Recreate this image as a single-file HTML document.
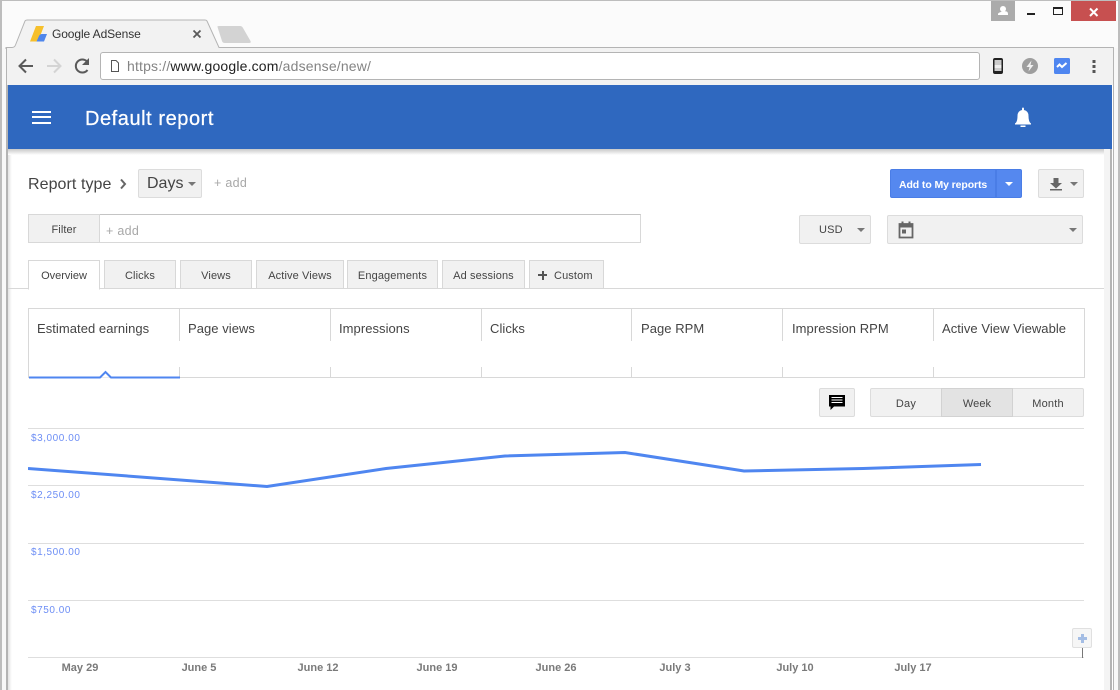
<!DOCTYPE html>
<html><head><meta charset="utf-8"><style>
html,body{margin:0;padding:0;background:#fff}
#p{position:relative;width:1120px;height:690px;overflow:hidden;background:#fff;font-family:"Liberation Sans",sans-serif;color:#444}
#p div,#p span.a{position:absolute;box-sizing:border-box}
.t{white-space:nowrap}
.btn{background:#f1f1f1;border:1px solid #dcdcdc;border-radius:2px}
.tab{top:260px;height:29px;background:#f1f1f1;border:1px solid #d8d8d8;border-bottom:1px solid #d8d8d8;font-size:11px;line-height:30px;text-align:center;color:#444;letter-spacing:.12px}
.m{top:321px;font-size:13px;color:#444;white-space:nowrap;letter-spacing:.05px;line-height:16px}
.sep{width:1px;background:#d8d8d8}
.g{left:28px;width:1056px;height:1px;background:#dedede}
.y{left:31px;font-size:10px;color:#6d8ef5;white-space:nowrap;letter-spacing:.55px;line-height:12px}
.x{top:662px;font-size:11px;font-weight:bold;color:#7a7a7a;white-space:nowrap;text-align:center;width:80px;line-height:13px}
.car{width:0;height:0;border-left:4px solid transparent;border-right:4px solid transparent;border-top:4px solid #777}
</style></head><body><div id="p">
<!-- window frame -->
<div style="left:0;top:0;width:1120px;height:48px;background:#fbfbfb"></div>
<div style="left:0;top:0;width:1120px;height:1px;background:#bdbdbd"></div>
<div style="left:0;top:0;width:2px;height:690px;background:#bdbdbd"></div>
<div style="left:2px;top:48px;width:4px;height:642px;background:#f8f8f8"></div>
<div style="left:1114px;top:48px;width:4px;height:642px;background:#f8f8f8"></div>
<div style="left:1118px;top:0;width:2px;height:690px;background:#bdbdbd"></div>
<!-- caption buttons -->
<div style="left:991px;top:1px;width:24px;height:20px;background:#ababab"></div>
<svg class="a" style="position:absolute;left:991px;top:1px" width="24" height="20"><circle cx="12" cy="8" r="3" fill="#fff"/><path d="M7 14v-1q0-1.500 5-2.500t5 2.500v1z" fill="#fff"/></svg>
<div style="left:1027px;top:13px;width:8px;height:2px;background:#222"></div>
<div style="left:1053px;top:7px;width:10px;height:8px;border:1px solid #222;border-top-width:2px"></div>
<div style="left:1071px;top:1px;width:45px;height:20px;background:#c75050"></div>
<svg style="position:absolute;left:1089px;top:7px" width="10" height="10"><path d="M1 1.500 8.500 9M8.500 1.500 1 9" stroke="#fff" stroke-width="2"/></svg>
<!-- tab strip -->
<svg style="position:absolute;left:0;top:0" width="260" height="50">
<path d="M6 48V47H13Q15 47 16 45L25 21Q26 20 28 20H204Q206 20 207 21L219 47H260V49H6Z" fill="#f2f2f2"/>
<path d="M6 49V47.500H12Q14.500 47.500 15.500 45L25 21Q25.500 20 27.500 20H205Q206.500 20 207 21L219 47.500H260" fill="none" stroke="#b4b4b4" stroke-width="1"/>
<path d="M217.500 27Q217 26 219 26H240Q242 26 243 28L250.500 41Q251.500 43 249 43H225Q222.500 43 222 41Z" fill="#d3d3d3"/>
<path d="M36 26H44L38 41.500H30Z" fill="#f6c02c"/><path d="M42 34H47L44 41.500H36.500L39 36Q40 34 42 34Z" fill="#4f86ec"/>
<path d="M193.500 30.500 200.500 37.500M200.500 30.500 193.500 37.500" stroke="#5a5a5a" stroke-width="1.800"/>
</svg>
<div class="t" style="left:52px;top:27px;font-size:12px;line-height:15px;color:#333;letter-spacing:-.1px">Google AdSense</div>
<!-- toolbar -->
<div style="left:219px;top:47px;width:895px;height:1px;background:#b4b4b4"></div>
<div style="left:6px;top:48px;width:1108px;height:37px;background:#f2f2f2;border-left:1px solid #b4b4b4;border-right:1px solid #b4b4b4"></div>
<div style="left:100px;top:52px;width:880px;height:28px;background:#fff;border:1px solid #b4b4b4;border-radius:3px"></div>
<svg style="position:absolute;left:0;top:48px" width="130" height="36">
<path d="M33 18H20M26 11.500 19.500 18 26 24.500" fill="none" stroke="#5a5a5a" stroke-width="2"/>
<path d="M47 18H60M54 11.500 60.500 18 54 24.500" fill="none" stroke="#d4d4d4" stroke-width="2"/>
<path d="M87.500 22A6.500 6.500 0 1 1 87 13.500" fill="none" stroke="#5a5a5a" stroke-width="2"/><path d="M89 10V17H82Z" fill="#5a5a5a"/>
<path d="M111.500 12.500H116L118.500 15V23.500H111.500Z" fill="#fff" stroke="#555" stroke-width="1"/>
</svg>
<div class="t" style="left:127px;top:58px;font-size:14px;line-height:17px;color:#848484;letter-spacing:.17px">https://<span style="color:#222">www.google.com</span>/adsense/new/</div>
<svg style="position:absolute;left:985px;top:52px" width="125" height="28">
<rect x="8" y="6" width="10" height="16" rx="2" fill="#222"/><rect x="9.500" y="8" width="7" height="11" fill="#ccc"/><rect x="9.500" y="13" width="7" height="3" fill="#eee"/>
<circle cx="45" cy="14" r="8" fill="#9e9e9e"/><path d="M46.500 8.500 41.500 15H44.500L43.500 19.500 48.500 13H45.500Z" fill="#f2f2f2"/>
<rect x="69" y="6" width="16" height="16" rx="1.500" fill="#4f86f0"/><path d="M72 15 74.500 12.500 77 15 81.500 11" fill="none" stroke="#fff" stroke-width="2"/>
<rect x="107.500" y="8" width="3" height="3" fill="#555"/><rect x="107.500" y="13" width="3" height="3" fill="#555"/><rect x="107.500" y="18" width="3" height="3" fill="#555"/>
</svg>
<!-- page side chrome -->
<div style="left:6px;top:85px;width:2px;height:605px;background:#b4b4b4"></div>
<div style="left:8px;top:149px;width:4px;height:541px;background:linear-gradient(90deg,#e4e4e4,#fff)"></div>
<div style="left:1104px;top:149px;width:6px;height:541px;background:#f4f4f4"></div>
<div style="left:1110px;top:149px;width:2px;height:541px;background:#b4b4b4"></div>
<div style="left:1112px;top:149px;width:1px;height:541px;background:#fff"></div>
<div style="left:1113px;top:85px;width:1px;height:605px;background:#b4b4b4"></div>
<!-- header -->
<div style="left:8px;top:149px;width:1096px;height:6px;background:linear-gradient(#c8c8c8,#fff)"></div>
<div style="left:8px;top:85px;width:1104px;height:64px;background:#2f68bf"></div>
<div style="left:32px;top:111px;width:19px;height:2px;background:#fff"></div>
<div style="left:32px;top:116px;width:19px;height:2px;background:#fff"></div>
<div style="left:32px;top:122px;width:19px;height:2px;background:#fff"></div>
<div class="t" style="left:85px;top:107px;font-size:20px;line-height:24px;color:#fff;letter-spacing:.56px;-webkit-text-stroke:.25px #fff">Default report</div>
<svg style="position:absolute;left:1012px;top:105px" width="22" height="24"><path d="M3 18.500Q5.500 17 5.500 11Q5.500 6 10 5V4Q10 2.500 11 2.500T12 4V5Q16.500 6 16.500 11Q16.500 17 19 18.500V19.500H3Z" fill="#fff"/><rect x="8.500" y="20.500" width="5" height="1.500" fill="#fff"/></svg>
<!-- report row -->
<div class="t" style="left:28px;top:175px;font-size:16px;line-height:19px;color:#444;letter-spacing:.07px">Report type</div>
<svg style="position:absolute;left:119px;top:177px" width="10" height="14"><path d="M2 2.500 6 7 2 11.500" fill="none" stroke="#666" stroke-width="2"/></svg>
<div class="btn" style="left:138px;top:169px;width:64px;height:29px"></div>
<div class="t" style="left:147px;top:174px;font-size:16px;line-height:19px;color:#444;letter-spacing:0">Days</div>
<div class="car" style="left:188px;top:182px"></div>
<div class="t" style="left:214px;top:175px;font-size:12.500px;line-height:16px;color:#a8a8a8;letter-spacing:.3px">+ add</div>
<div style="left:890px;top:169px;width:106px;height:29px;background:#5588ef;border:1px solid #4a7de6;border-radius:2px 0 0 2px"></div>
<div class="t" style="left:899px;top:178px;font-size:10.500px;font-weight:bold;line-height:14px;color:#fff;letter-spacing:-.1px">Add to My reports</div>
<div style="left:996px;top:169px;width:26px;height:29px;background:#5588ef;border:1px solid #4a7de6;border-radius:0 2px 2px 0"></div>
<div class="car" style="left:1005px;top:182px;border-top-color:#fff"></div>
<div class="btn" style="left:1038px;top:169px;width:46px;height:29px"></div>
<svg style="position:absolute;left:1048px;top:176px" width="16" height="16"><path d="M5.500 2H10.500V7H14L8 12.500 2 7H5.500Z" fill="#666"/><rect x="2" y="13" width="12" height="1.500" fill="#666"/></svg>
<div class="car" style="left:1070px;top:182px"></div>
<!-- filter row -->
<div style="left:28px;top:214px;width:613px;height:29px;background:#fff;border:1px solid #d8d8d8;border-top-color:#c4c4c4"></div>
<div style="left:28px;top:214px;width:72px;height:29px;background:#f1f1f1;border:1px solid #d8d8d8"></div>
<div class="t" style="left:28px;width:72px;text-align:center;top:223px;font-size:11px;line-height:14px;color:#444;letter-spacing:.1px">Filter</div>
<div class="t" style="left:106px;top:223px;font-size:12.500px;line-height:16px;color:#a8a8a8;letter-spacing:.3px">+ add</div>
<div class="btn" style="left:799px;top:215px;width:72px;height:29px"></div>
<div class="t" style="left:819px;top:223px;font-size:11px;line-height:14px;color:#444;letter-spacing:.2px">USD</div>
<div class="car" style="left:857px;top:228px"></div>
<div class="btn" style="left:887px;top:215px;width:196px;height:29px"></div>
<svg style="position:absolute;left:897px;top:220px" width="18" height="20"><path d="M2.500 4H15.500V17.500H2.500Z" fill="none" stroke="#666" stroke-width="1.800"/><rect x="2" y="4" width="14" height="3.500" fill="#666"/><rect x="4.500" y="1.500" width="2" height="3" fill="#666"/><rect x="11.500" y="1.500" width="2" height="3" fill="#666"/><rect x="5" y="9.500" width="4" height="4" fill="#666"/></svg>
<div class="car" style="left:1069px;top:228px"></div>
<!-- tabs -->
<div style="left:8px;top:288px;width:1096px;height:1px;background:#d8d8d8"></div>
<div class="tab" style="left:28px;width:72px;background:#fff;border-bottom:1px solid #fff;height:30px;letter-spacing:0">Overview</div>
<div class="tab" style="left:104px;width:72px">Clicks</div>
<div class="tab" style="left:180px;width:72px">Views</div>
<div class="tab" style="left:256px;width:88px">Active Views</div>
<div class="tab" style="left:347px;width:91px">Engagements</div>
<div class="tab" style="left:442px;width:83px">Ad sessions</div>
<div class="tab" style="left:529px;width:75px;text-align:left;padding-left:24px">Custom</div>
<div style="left:538px;top:274px;width:9px;height:2px;background:#555"></div>
<div style="left:542px;top:271px;width:2px;height:9px;background:#555"></div>
<!-- metrics -->
<div style="left:28px;top:308px;width:1057px;height:70px;border:1px solid #d8d8d8;background:#fff"></div>
<div class="m" style="left:37px">Estimated earnings</div>
<div class="m" style="left:188px">Page views</div>
<div class="m" style="left:339px">Impressions</div>
<div class="m" style="left:490px">Clicks</div>
<div class="m" style="left:641px">Page RPM</div>
<div class="m" style="left:792px">Impression RPM</div>
<div class="m" style="left:942px">Active View Viewable</div>
<div class="sep" style="left:179px;top:309px;height:32px"></div><div class="sep" style="left:179px;top:367px;height:10px"></div>
<div class="sep" style="left:330px;top:309px;height:32px"></div><div class="sep" style="left:330px;top:367px;height:10px"></div>
<div class="sep" style="left:481px;top:309px;height:32px"></div><div class="sep" style="left:481px;top:367px;height:10px"></div>
<div class="sep" style="left:631px;top:309px;height:32px"></div><div class="sep" style="left:631px;top:367px;height:10px"></div>
<div class="sep" style="left:782px;top:309px;height:32px"></div><div class="sep" style="left:782px;top:367px;height:10px"></div>
<div class="sep" style="left:933px;top:309px;height:32px"></div><div class="sep" style="left:933px;top:367px;height:10px"></div>
<svg style="position:absolute;left:29px;top:368px" width="151" height="11"><path d="M0 9.500H71L76.500 4 82 9.500H151" fill="#fff" stroke="#4f86f0" stroke-width="2"/></svg>
<!-- controls -->
<div class="btn" style="left:819px;top:388px;width:36px;height:29px"></div>
<svg style="position:absolute;left:828px;top:394px" width="18" height="18"><path d="M1 1H17V12.500H6L2.500 16V12.500H1Z" fill="#000"/><path d="M3.500 3.500H14.500M3.500 6H14.500M3.500 8.500H14.500" stroke="#fff" stroke-width="1"/></svg>
<div style="left:870px;top:388px;width:214px;height:29px;background:#f1f1f1;border:1px solid #dcdcdc;border-radius:2px"></div>
<div style="left:941px;top:388px;width:72px;height:29px;background:#e3e3e3;border:1px solid #d2d2d2"></div>
<div class="t" style="left:870px;width:72px;text-align:center;top:397px;font-size:11px;line-height:14px;color:#444;letter-spacing:.2px">Day</div>
<div class="t" style="left:941px;width:72px;text-align:center;top:397px;font-size:11px;line-height:14px;color:#444;letter-spacing:.1px">Week</div>
<div class="t" style="left:1012px;width:72px;text-align:center;top:397px;font-size:11px;line-height:14px;color:#444;letter-spacing:.2px">Month</div>
<!-- chart -->
<div class="g" style="top:428px"></div>
<div class="g" style="top:485px"></div>
<div class="g" style="top:543px"></div>
<div class="g" style="top:600px"></div>
<div class="g" style="top:657px"></div>
<div class="y" style="top:433px">$3,000.00</div>
<div class="y" style="top:490px">$2,250.00</div>
<div class="y" style="top:547px">$1,500.00</div>
<div class="y" style="top:605px">$750.00</div>
<svg style="position:absolute;left:28px;top:440px" width="960" height="60"><polyline points="0,28.500 239,46.500 358,28.500 477,16 597,12.500 716,31 835,28.500 953,24.500" fill="none" stroke="#4f86f0" stroke-width="3"/></svg>
<div class="x" style="left:40px">May 29</div>
<div class="x" style="left:159px">June 5</div>
<div class="x" style="left:278px">June 12</div>
<div class="x" style="left:397px">June 19</div>
<div class="x" style="left:516px">June 26</div>
<div class="x" style="left:635px">July 3</div>
<div class="x" style="left:755px">July 10</div>
<div class="x" style="left:873px">July 17</div>
<div style="left:1082px;top:648px;width:1px;height:10px;background:#777"></div>
<div style="left:1072px;top:628px;width:20px;height:20px;background:#f6f6f6;border:1px solid #e0e0e0;border-radius:2px"></div>
<div style="left:1078px;top:637px;width:9px;height:3px;background:#a4bde4"></div>
<div style="left:1081px;top:634px;width:3px;height:9px;background:#a4bde4"></div>
</div></body></html>
